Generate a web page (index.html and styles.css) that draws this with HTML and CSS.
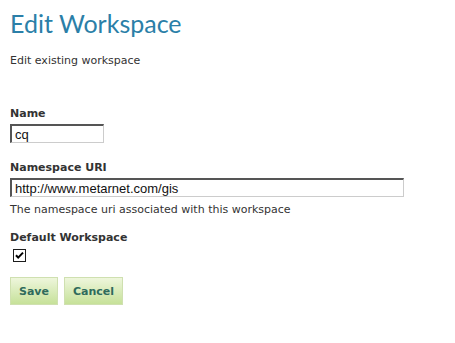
FILE: index.html
```html
<!DOCTYPE html>
<html lang="en">
<head>
  <meta charset="UTF-8">
  <title>Edit Workspace</title>
  <link rel="stylesheet" href="styles.css">
</head>
<body>
  <!-- Page title -->
  <div class="page-header">
    <h1>Edit Workspace</h1>
    <p class="description">Edit existing workspace</p>
  </div>

  <!-- Workspace form -->
  <form class="workspace-form">
    <div class="field field-name">
      <label for="name">Name</label>
      <input type="text" id="name" class="input-short" value="cq">
    </div>
    <div class="field field-uri">
      <label for="uri">Namespace URI</label>
      <input type="text" id="uri" class="input-long" value="http://www.metarnet.com/gis">
      <p class="help">The namespace uri associated with this workspace</p>
    </div>
    <div class="field">
      <label for="default">Default Workspace</label>
      <!-- classic checkbox look -->
      <span class="check" id="default">
        <svg width="13" height="13" viewBox="0 0 13 13">
          <rect x="0.5" y="0.5" width="12" height="12" fill="white" stroke="#1c1c1c"/>
          <path d="M3 6.2 L5.2 8.6 L10 3.6" fill="none" stroke="#000" stroke-width="2"/>
        </svg>
      </span>
    </div>
    <div class="buttons">
      <button type="button" class="btn">Save</button>
      <button type="button" class="btn">Cancel</button>
    </div>
  </form>
</body>
</html>
```

FILE: styles.css
```css
/* Global Styles */
body {
  margin: 0;
  padding: 0 10px;
  background: white;
  color: #333;
  font-family: "DejaVu Sans", Verdana, sans-serif;
  font-size: 11px;
}
h1 {
  margin: 0;
  padding-top: 8px;
  font-family: Lato, "Open Sans", sans-serif;
  font-weight: normal;
  font-size: 25px;
  line-height: 30px;
  color: #2b7fa8;
}
.description {
  margin: 16px 0 0 0;
  line-height: 14px;
}
.workspace-form {
  margin-top: 39px;
}
.field {
  margin-bottom: 15px;
}
.field-name {
  margin-bottom: 18px;
}
.field-uri {
  margin-bottom: 14px;
}
.field label {
  display: block;
  font-weight: bold;
  line-height: 14px;
  margin-bottom: 3px;
}
.field input[type="text"] {
  display: block;
  box-sizing: border-box;
  height: 19px;
  margin: 0;
  padding: 0 3px;
  border-style: solid;
  border-width: 2px 1px 1px 2px;
  border-color: #555 #ccc #ccc #555;
  font-family: "Liberation Sans", Arial, sans-serif;
  font-size: 13px;
  color: #111;
}
.input-short {
  width: 94px;
}
.input-long {
  width: 394px;
}
.help {
  margin: 6px 0 0 0;
  line-height: 14px;
}
.check {
  display: block;
  width: 13px;
  height: 13px;
  margin: 4px 0 0 3px;
}
.check svg {
  display: block;
}
.buttons {
  margin-top: 11px;
  display: flex;
  gap: 6px;
}
.btn {
  height: 28px;
  padding: 0 8px;
  border: 1px solid #cfe0b0;
  background: linear-gradient(#eef6dc, #c6e199);
  color: #2f6b5c;
  font-family: "DejaVu Sans", Verdana, sans-serif;
  font-size: 11px;
  font-weight: bold;
}
```
